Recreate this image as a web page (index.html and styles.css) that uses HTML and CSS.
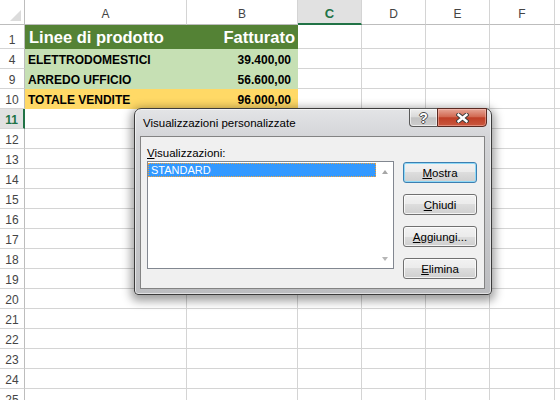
FILE: index.html
```html
<!DOCTYPE html>
<html lang="it">
<head>
<meta charset="utf-8">
<title>Visualizzazioni personalizzate</title>
<link rel="stylesheet" href="styles.css">
</head>
<body>
<div class="sheet">
  <div class="corner"><span class="tri"></span></div><div class="ch">A</div><div class="ch">B</div><div class="ch sel">C</div><div class="ch">D</div><div class="ch">E</div><div class="ch">F</div><div class="ch"></div>

  <div class="rh r1">1</div><div class="c hd">Linee di prodotto</div><div class="c hd num hdb">Fatturato</div><div class="c"></div><div class="c"></div><div class="c"></div><div class="c"></div><div class="c"></div>

  <div class="rh">4</div><div class="c lg">ELETTRODOMESTICI</div><div class="c lg num">39.400,00</div><div class="c"></div><div class="c"></div><div class="c"></div><div class="c"></div><div class="c"></div>

  <div class="rh">9</div><div class="c lg">ARREDO UFFICIO</div><div class="c lg num">56.600,00</div><div class="c"></div><div class="c"></div><div class="c"></div><div class="c"></div><div class="c"></div>

  <div class="rh">10</div><div class="c yl">TOTALE VENDITE</div><div class="c yl num">96.000,00</div><div class="c"></div><div class="c"></div><div class="c"></div><div class="c"></div><div class="c"></div>

  <div class="rh sel">11</div><div class="c"></div><div class="c"></div><div class="c"></div><div class="c"></div><div class="c"></div><div class="c"></div><div class="c"></div>

  <div class="rh">12</div><div class="c"></div><div class="c"></div><div class="c"></div><div class="c"></div><div class="c"></div><div class="c"></div><div class="c"></div>
  <div class="rh">13</div><div class="c"></div><div class="c"></div><div class="c"></div><div class="c"></div><div class="c"></div><div class="c"></div><div class="c"></div>
  <div class="rh">14</div><div class="c"></div><div class="c"></div><div class="c"></div><div class="c"></div><div class="c"></div><div class="c"></div><div class="c"></div>
  <div class="rh">15</div><div class="c"></div><div class="c"></div><div class="c"></div><div class="c"></div><div class="c"></div><div class="c"></div><div class="c"></div>
  <div class="rh">16</div><div class="c"></div><div class="c"></div><div class="c"></div><div class="c"></div><div class="c"></div><div class="c"></div><div class="c"></div>
  <div class="rh">17</div><div class="c"></div><div class="c"></div><div class="c"></div><div class="c"></div><div class="c"></div><div class="c"></div><div class="c"></div>
  <div class="rh">18</div><div class="c"></div><div class="c"></div><div class="c"></div><div class="c"></div><div class="c"></div><div class="c"></div><div class="c"></div>
  <div class="rh">19</div><div class="c"></div><div class="c"></div><div class="c"></div><div class="c"></div><div class="c"></div><div class="c"></div><div class="c"></div>
  <div class="rh">20</div><div class="c"></div><div class="c"></div><div class="c"></div><div class="c"></div><div class="c"></div><div class="c"></div><div class="c"></div>
  <div class="rh">21</div><div class="c"></div><div class="c"></div><div class="c"></div><div class="c"></div><div class="c"></div><div class="c"></div><div class="c"></div>
  <div class="rh">22</div><div class="c"></div><div class="c"></div><div class="c"></div><div class="c"></div><div class="c"></div><div class="c"></div><div class="c"></div>
  <div class="rh">23</div><div class="c"></div><div class="c"></div><div class="c"></div><div class="c"></div><div class="c"></div><div class="c"></div><div class="c"></div>
  <div class="rh">24</div><div class="c"></div><div class="c"></div><div class="c"></div><div class="c"></div><div class="c"></div><div class="c"></div><div class="c"></div>
  <div class="rh">25</div><div class="c"></div><div class="c"></div><div class="c"></div><div class="c"></div><div class="c"></div><div class="c"></div><div class="c"></div>
</div>

<div class="dialog">
  <div class="titlebar">
    <span class="title">Visualizzazioni personalizzate</span>
    <div class="caps">
      <div class="cap help"><span class="qm">?</span></div>
      <div class="cap close">
        <svg width="13" height="10" viewBox="0 0 13 10">
          <path d="M2.5 1.8 L10.5 8.2 M10.5 1.8 L2.5 8.2" stroke="#3b3b3b" stroke-width="4.4" stroke-linecap="square" fill="none"/>
          <path d="M2.5 1.8 L10.5 8.2 M10.5 1.8 L2.5 8.2" stroke="#ffffff" stroke-width="2.4" stroke-linecap="square" fill="none"/>
        </svg>
      </div>
    </div>
  </div>
  <div class="content">
    <div class="left">
      <div class="label"><u>V</u>isualizzazioni:</div>
      <div class="listbox">
        <div class="items"><div class="item">STANDARD</div></div>
        <div class="scroll"><span class="up"></span><span class="down"></span></div>
      </div>
    </div>
    <div class="btns">
      <div class="btn def"><u>M</u>ostra</div>
      <div class="btn"><u>C</u>hiudi</div>
      <div class="btn"><u>A</u>ggiungi...</div>
      <div class="btn"><u>E</u>limina</div>
    </div>
  </div>
</div>
</body>
</html>
```

FILE: styles.css
```css
html, body {
  margin: 0;
  padding: 0;
}
body {
  width: 560px;
  height: 400px;
  overflow: hidden;
  background: #ffffff;
  font-family: "Liberation Sans", Arial, sans-serif;
  position: relative;
}

.sheet {
  display: grid;
  grid-template-columns: 25px 162px 111px 64px 64px 64px 65px 1fr;
  grid-template-rows: 25px 24px repeat(18, 20px);
  height: 400px;
  overflow: hidden;
}
.sheet > div {
  box-sizing: border-box;
  overflow: hidden;
  white-space: nowrap;
}

.corner {
  border-right: 1px solid #bdbdbd;
  border-bottom: 1px solid #bdbdbd;
  display: flex;
  align-items: flex-end;
  justify-content: flex-end;
  padding: 0 3px 3px 0;
}
.tri {
  width: 0;
  height: 0;
  border-left: 11px solid transparent;
  border-bottom: 11px solid #dcdcdc;
}

.ch {
  display: flex;
  align-items: flex-end;
  justify-content: center;
  padding-bottom: 3px;
  font-size: 12px;
  line-height: 14px;
  color: #444444;
  border-right: 1px solid #d4d4d4;
  border-bottom: 1px solid #bdbdbd;
}
.ch.sel {
  background: #e1e1e1;
  color: #217346;
  font-weight: bold;
  font-size: 13px;
  border-bottom: 2px solid #217346;
  padding-bottom: 2px;
}

.rh {
  display: flex;
  align-items: flex-end;
  justify-content: center;
  padding-bottom: 1px;
  font-size: 12px;
  line-height: 14px;
  color: #444444;
  border-right: 1px solid #bdbdbd;
  border-bottom: 1px solid #d4d4d4;
}
.rh.sel {
  background: #e1e1e1;
  color: #217346;
  font-weight: bold;
  border-right: 2px solid #217346;
}

.c {
  display: flex;
  align-items: flex-end;
  padding: 0 3px 1px 3px;
  font-size: 12px;
  line-height: 14px;
  font-weight: bold;
  color: #000000;
  border-right: 1px solid #d4d4d4;
  border-bottom: 1px solid #d4d4d4;
}
.num {
  justify-content: flex-end;
  padding-right: 6px;
}
.hd {
  background: #548235;
  border-color: #548235;
  color: #ffffff;
  font-size: 16.5px;
  line-height: 19px;
  padding-left: 4px;
}
.hd.hdb {
  padding-right: 2px;
}
.lg {
  background: #c6e0b4;
  border-color: #c6e0b4;
}
.yl {
  background: #ffd966;
  border-color: #ffd966;
}

/* dialog */
.dialog {
  position: absolute;
  left: 134px;
  top: 108px;
  width: 358px;
  height: 187px;
  box-sizing: border-box;
  border: 1px solid #3c3c3c;
  border-radius: 7px 7px 4px 4px;
  background: linear-gradient(#e3e4e6 0, #d4d5d8 28px, #bcbdc0 100%);
  box-shadow: 0 3px 10px 3px rgba(0, 0, 0, 0.38), inset 0 0 0 1px rgba(255, 255, 255, 0.55);
  display: flex;
  flex-direction: column;
  font-size: 11.5px;
  color: #000000;
}
.titlebar {
  height: 27px;
  flex: none;
  display: flex;
  justify-content: space-between;
  align-items: flex-start;
  padding: 0 4px 0 8px;
}
.title {
  margin-top: 7px;
  line-height: 14px;
}
.caps {
  display: flex;
  margin-top: -1px;
}
.cap {
  height: 19px;
  box-sizing: border-box;
  border: 1px solid #595959;
  display: flex;
  align-items: center;
  justify-content: center;
}
.help {
  width: 28px;
  border-right: none;
  border-radius: 0 0 0 4px;
  background: linear-gradient(#eeeeee 0, #dadada 45%, #c2c2c2 52%, #cdcdcd 100%);
  box-shadow: inset 0 0 0 1px rgba(255, 255, 255, 0.6);
}
.qm {
  font-weight: bold;
  font-size: 14px;
  line-height: 14px;
  color: #ffffff;
  text-shadow: 1px 0 0 #4a4a4a, -1px 0 0 #4a4a4a, 0 1px 0 #4a4a4a, 0 -1px 0 #4a4a4a;
}
.close {
  width: 50px;
  border-color: #5a2a22;
  border-radius: 0 0 4px 0;
  background: linear-gradient(#e6a596 0, #d26a53 45%, #bf3f27 52%, #c9583f 100%);
  box-shadow: inset 0 0 0 1px rgba(255, 205, 195, 0.45);
}
.close svg {
  display: block;
}

.content {
  flex: 1;
  margin: 0 6px 5px 5px;
  box-sizing: border-box;
  border: 1px solid #838383;
  background: #f0f0f0;
  display: flex;
  align-items: flex-start;
  padding: 9px 7px 0 6px;
  gap: 9px;
}
.left {
  width: 247px;
}
.label {
  line-height: 14px;
  margin-bottom: 1px;
}
.listbox {
  height: 108px;
  box-sizing: border-box;
  border: 1px solid #828790;
  background: #ffffff;
  display: flex;
}
.items {
  flex: 1;
  padding: 1px 0 0 0;
}
.item {
  height: 14px;
  box-sizing: border-box;
  background: #3399ff;
  color: #ffffff;
  font-size: 11px;
  line-height: 12px;
  padding-left: 2px;
  border: 1px dotted #f0a23c;
}
.scroll {
  width: 17px;
  display: flex;
  flex-direction: column;
  justify-content: space-between;
  align-items: center;
  padding: 8px 0 7px 0;
  box-sizing: border-box;
}
.up {
  width: 0;
  height: 0;
  border-left: 3.5px solid transparent;
  border-right: 3.5px solid transparent;
  border-bottom: 4px solid #a6a6a6;
}
.down {
  width: 0;
  height: 0;
  border-left: 3.5px solid transparent;
  border-right: 3.5px solid transparent;
  border-top: 4px solid #b6b6b6;
}

.btns {
  width: 74px;
  display: flex;
  flex-direction: column;
  gap: 11px;
  margin-top: 16px;
}
.btn {
  height: 21px;
  box-sizing: border-box;
  border: 1px solid #707070;
  border-radius: 3px;
  background: linear-gradient(#f2f2f2 0, #ebebeb 50%, #dddddd 50%, #cfcfcf 100%);
  box-shadow: inset 0 0 0 1px rgba(255, 255, 255, 0.75);
  display: flex;
  align-items: center;
  justify-content: center;
  line-height: 14px;
}
.btn.def {
  border-color: #3c7fb1;
  box-shadow: inset 0 0 0 1px #8fd9f7;
}
```
